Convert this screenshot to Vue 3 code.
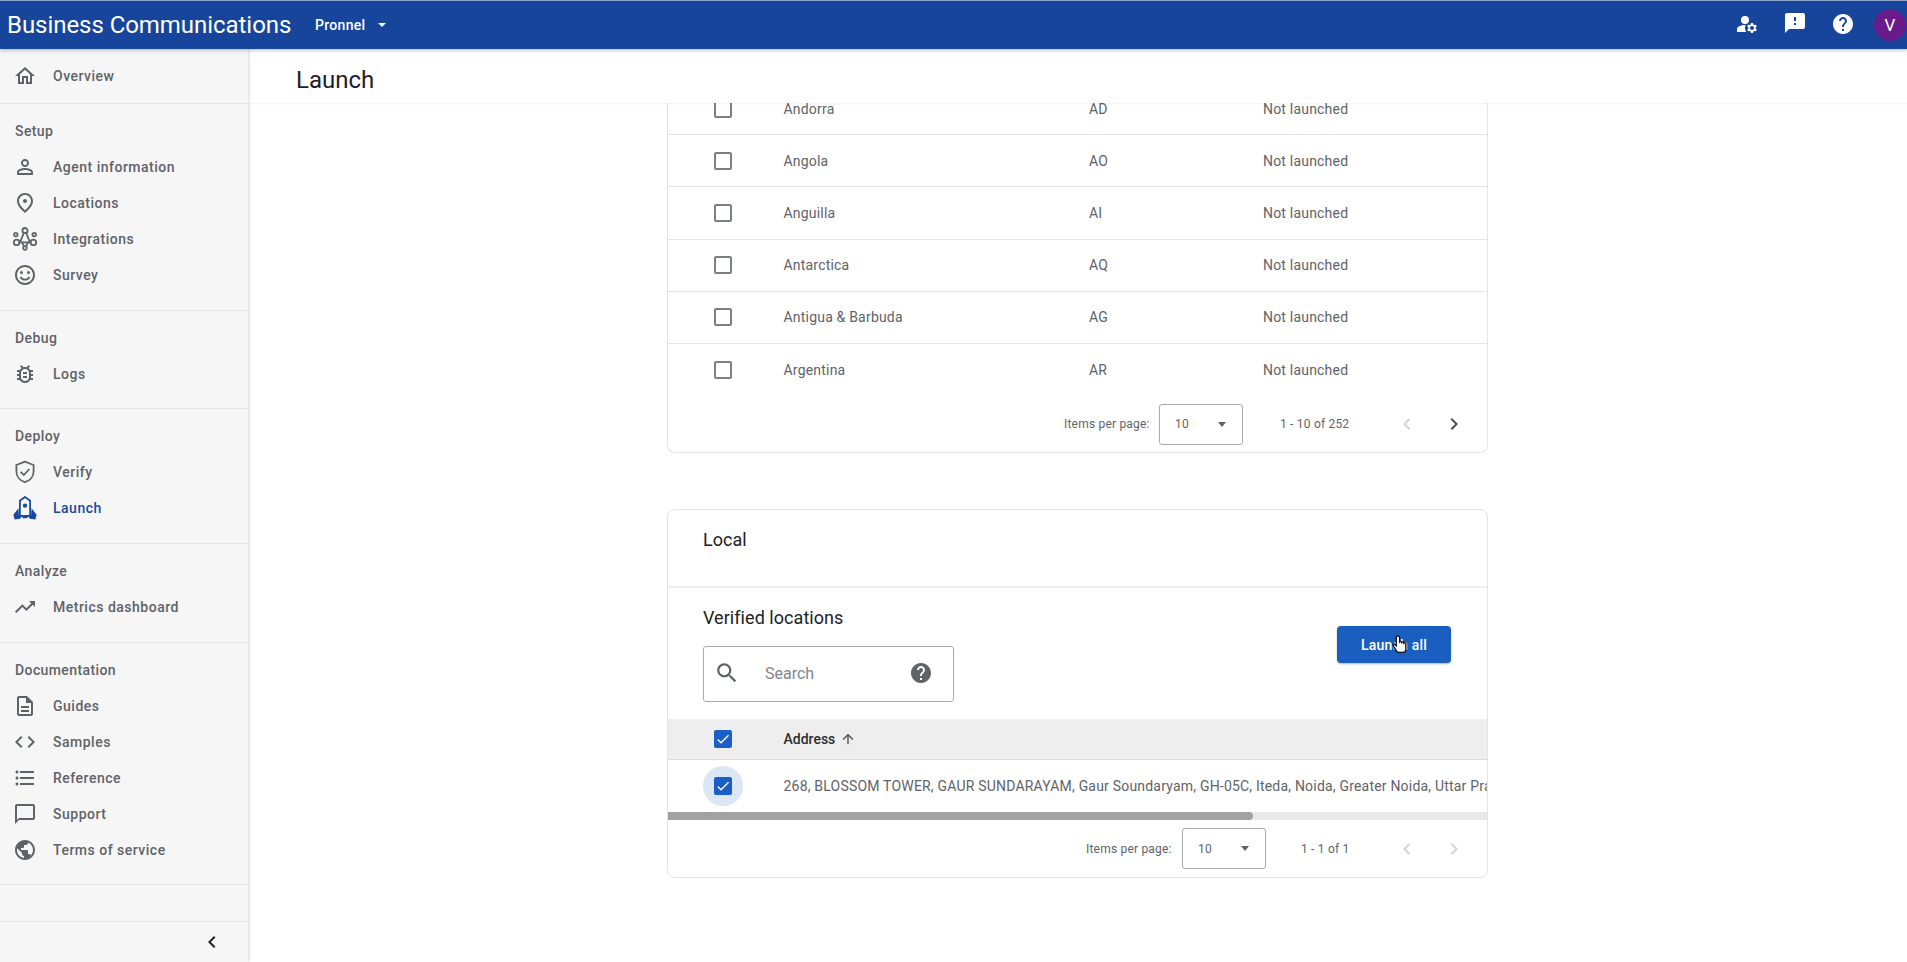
<template>
  <div class="page">
    <header class="topbar">
      <span class="brand">Business Communications</span>
      <span class="agent">Pronnel</span>
      <span class="agent-arrow"></span>
      <div class="top-actions">
        <svg class="top-icon" viewBox="0 0 24 24"><circle cx="10" cy="8" r="4" /><path v-for="d in icons.manage" :key="d" :d="d" /></svg>
        <svg class="top-icon feedback" viewBox="0 0 24 24"><path :d="icons.feedback" /></svg>
        <svg class="top-icon" viewBox="0 0 24 24"><path :d="icons.help" /></svg>
        <span class="avatar">V</span>
      </div>
    </header>

    <div class="body">
      <aside class="sidebar">
        <div v-for="section in nav" :key="section.title || 'main'" class="nav-section">
          <div v-if="section.title" class="nav-title">{{ section.title }}</div>
          <div
            v-for="item in section.items"
            :key="item.label"
            class="nav-item"
            :class="{ active: item.label === 'Launch' }"
          >
            <svg class="nav-icon" viewBox="0 0 24 24">
              <path v-for="d in item.fill" :key="d" :d="d" />
              <path v-for="d in item.line" :key="d" :d="d" class="line" />
            </svg>
            <span>{{ item.label }}</span>
          </div>
        </div>
        <div class="nav-spacer"></div>
        <div class="nav-footer">
          <svg class="collapse" viewBox="0 0 24 24"><path :d="icons.left" /></svg>
        </div>
      </aside>

      <main class="main">
        <div class="subheader"><h1>Launch</h1></div>
        <div class="scroller">
          <div class="scrolled">
            <section class="card">
              <div v-for="c in countries" :key="c.code" class="row">
                <div class="cell-check"><span class="checkbox"></span></div>
                <div class="country">{{ c.name }}</div>
                <div class="code">{{ c.code }}</div>
                <div>Not launched</div>
              </div>
              <div class="paginator first">
                <span class="per-page">Items per page:</span>
                <div class="page-select"><span>10</span><i class="select-arrow"></i></div>
                <span class="range">1 - 10 of 252</span>
                <svg class="pager-btn off" viewBox="0 0 24 24"><path :d="icons.left" /></svg>
                <svg class="pager-btn" viewBox="0 0 24 24"><path :d="icons.right" /></svg>
              </div>
            </section>

            <section class="card local">
              <div class="card-title">Local</div>
              <div class="verified">
                <div>
                  <h2>Verified locations</h2>
                  <div class="search">
                    <svg class="search-icon" viewBox="0 0 24 24"><path :d="icons.search" /></svg>
                    <span class="search-text">Search</span>
                    <svg class="search-help" viewBox="0 0 24 24"><path :d="icons.help" /></svg>
                  </div>
                </div>
                <button class="launch-btn">
                  Launch all
                  <svg class="hand" viewBox="0 0 24 24">
                    <path d="M9 2.5c-.9 0-1.5.7-1.5 1.6V14l-2-1.8c-.8-.7-2-.2-2 .8 0 .4.2.7.4 1l4 6.5c.6 1 1.6 1.5 2.7 1.5h5c2 0 3.4-1.5 3.4-3.5v-6.5c0-.9-.6-1.5-1.4-1.5-.4 0-.7.1-1 .4 0-.9-.7-1.4-1.4-1.4-.5 0-.9.2-1.2.6-.1-.8-.7-1.3-1.4-1.3-.4 0-.8.1-1 .4V4.1c0-.9-.7-1.6-1.6-1.6z" />
                  </svg>
                </button>
              </div>
              <div class="table-head">
                <div class="cell-check"><span class="checkbox checked"><svg viewBox="0 0 24 24"><path :d="icons.check" /></svg></span></div>
                <span class="address-head">Address</span>
                <svg class="sort" viewBox="0 0 24 24"><path :d="icons.up" /></svg>
              </div>
              <div class="address-row">
                <div class="cell-check">
                  <span class="ripple"></span>
                  <span class="checkbox checked"><svg viewBox="0 0 24 24"><path :d="icons.check" /></svg></span>
                </div>
                <div class="address">268, BLOSSOM TOWER, GAUR SUNDARAYAM, Gaur Soundaryam, GH-05C, Iteda, Noida, Greater Noida, Uttar Pradesh, India</div>
              </div>
              <div class="scrollbar"><div class="thumb"></div></div>
              <div class="paginator second">
                <span class="per-page">Items per page:</span>
                <div class="page-select"><span>10</span><i class="select-arrow"></i></div>
                <span class="range">1 - 1 of 1</span>
                <svg class="pager-btn off" viewBox="0 0 24 24"><path :d="icons.left" /></svg>
                <svg class="pager-btn off" viewBox="0 0 24 24"><path :d="icons.right" /></svg>
              </div>
            </section>
          </div>
        </div>
      </main>
    </div>
  </div>
</template>

<script setup>
const ring = (x, y, r) => `M${x - r} ${y}a${r} ${r} 0 1 0 ${r * 2} 0a${r} ${r} 0 1 0 ${-r * 2} 0z`

const icons = {
  left: "M15.41 7.41L14 6l-6 6 6 6 1.41-1.41L10.83 12z",
  right: "M10 6L8.59 7.41 13.17 12l-4.58 4.59L10 18l6-6z",
  check: "M9 16.17L4.83 12l-1.42 1.41L9 19 21 7l-1.41-1.41z",
  up: "M4 12l1.41 1.41L11 7.83V20h2V7.83l5.58 5.59L20 12l-8-8-8 8z",
  search: "M15.5 14h-.79l-.28-.27C15.41 12.59 16 11.11 16 9.5 16 5.91 13.09 3 9.5 3S3 5.91 3 9.5 5.91 16 9.5 16c1.61 0 3.09-.59 4.23-1.57l.27.28v.79l5 4.99L20.49 19l-4.99-5zm-6 0C7.01 14 5 11.99 5 9.5S7.01 5 9.5 5 14 7.01 14 9.5 11.99 14 9.5 14z",
  help: "M12 2C6.48 2 2 6.48 2 12s4.48 10 10 10 10-4.48 10-10S17.52 2 12 2zm1 17h-2v-2h2v2zm2.07-7.75l-.9.92C13.45 12.9 13 13.5 13 15h-2v-.5c0-1.1.45-2.1 1.17-2.83l1.24-1.26c.37-.36.59-.86.59-1.41 0-1.1-.9-2-2-2s-2 .9-2 2H8c0-2.21 1.79-4 4-4s4 1.79 4 4c0 .88-.36 1.68-.93 2.25z",
  feedback: "M20 2H4c-1.1 0-1.99.9-1.99 2L2 22l4-4h14c1.1 0 2-.9 2-2V4c0-1.1-.9-2-2-2zm-7 12h-2v-2h2v2zm0-4h-2V6h2v4z",
  manage: [
    "M10.67 13.02C10.45 13.01 10.23 13 10 13c-2.42 0-4.68.67-6.61 1.82-.88.52-1.39 1.5-1.39 2.53V20h9.26c-.79-1.13-1.26-2.51-1.26-4 0-1.07.25-2.07.67-2.98z",
    "M20.75 16c0-.22-.03-.42-.06-.63l1.14-1.01-1-1.73-1.45.49c-.32-.27-.68-.48-1.08-.63L18 11h-2l-.3 1.49c-.4.15-.76.36-1.08.63l-1.45-.49-1 1.73 1.14 1.01c-.03.21-.06.41-.06.63s.03.42.06.63l-1.14 1.01 1 1.73 1.45-.49c.32.27.68.48 1.08.63L16 21h2l.3-1.49c.4-.15.76-.36 1.08-.63l1.45.49 1-1.73-1.14-1.01c.03-.21.06-.41.06-.63zM17 18c-1.1 0-2-.9-2-2s.9-2 2-2 2 .9 2 2-.9 2-2 2z",
  ],
}

const nav = [
  {
    title: "",
    items: [
      { label: "Overview", fill: ["M12 5.69l5 4.5V18h-2v-6H9v6H7v-7.81l5-4.5M12 3L2 12h3v8h6v-6h2v6h6v-8h3L12 3z"] },
    ],
  },
  {
    title: "Setup",
    items: [
      { label: "Agent information", fill: ["M12 5.9c1.16 0 2.1.94 2.1 2.1s-.94 2.1-2.1 2.1S9.9 9.16 9.9 8s.94-2.1 2.1-2.1m0 9c2.97 0 6.1 1.46 6.1 2.1v1.1H5.9V17c0-.64 3.13-2.1 6.1-2.1M12 4C9.79 4 8 5.79 8 8s1.79 4 4 4 4-1.79 4-4-1.79-4-4-4zm0 9c-2.67 0-8 1.34-8 4v3h16v-3c0-2.66-5.33-4-8-4z"] },
      { label: "Locations", fill: ["M12 12c-1.1 0-2-.9-2-2s.9-2 2-2 2 .9 2 2-.9 2-2 2zm6-1.8C18 6.57 15.35 4 12 4s-6 2.57-6 6.2c0 2.34 1.95 5.44 6 9.14 4.05-3.7 6-6.8 6-9.14zM12 2c4.2 0 8 3.22 8 8.2 0 3.32-2.67 7.25-8 11.8-5.33-4.55-8-8.48-8-11.8C4 5.22 7.8 2 12 2z"] },
      {
        label: "Integrations",
        line: [
          ring(12, 3.6, 2.6), ring(2.8, 7.6, 1.8), ring(21.2, 7.6, 1.8), ring(3.6, 15.4, 2.8), ring(20.4, 15.4, 2.8), ring(12, 21, 1.8),
          "M10.8 6L7 15.4h10L13.2 6M6.4 15.4h11.2M9 15.6l2 3.6M15 15.6l-2 3.6",
        ],
      },
      {
        label: "Survey",
        fill: ["M11.99 2C6.47 2 2 6.48 2 12s4.47 10 9.99 10C17.52 22 22 17.52 22 12S17.52 2 11.99 2zM12 20c-4.42 0-8-3.58-8-8s3.58-8 8-8 8 3.58 8 8-3.58 8-8 8z", ring(8.5, 9.5, 1.5), ring(15.5, 9.5, 1.5)],
        line: ["M7.5 14c1 1.8 2.6 2.7 4.5 2.7s3.5-.9 4.5-2.7"],
      },
    ],
  },
  {
    title: "Debug",
    items: [
      { label: "Logs", fill: ["M20 8h-2.81c-.45-.78-1.07-1.45-1.82-1.96L17 4.41 15.59 3l-2.17 2.17C12.96 5.06 12.49 5 12 5s-.96.06-1.41.17L8.41 3 7 4.41l1.62 1.63C7.88 6.55 7.26 7.22 6.81 8H4v2h2.09c-.05.33-.09.66-.09 1v1H4v2h2v1c0 .34.04.67.09 1H4v2h2.81c1.04 1.79 2.97 3 5.19 3s4.15-1.21 5.19-3H20v-2h-2.09c.05-.33.09-.66.09-1v-1h2v-2h-2v-1c0-.34-.04-.67-.09-1H20V8zm-4 4v3c0 .22-.03.47-.07.7l-.1.65-.37.65c-.72 1.24-2.04 2-3.46 2s-2.74-.77-3.46-2l-.37-.64-.1-.65C8.03 15.48 8 15.23 8 15v-4c0-.23.03-.48.07-.7l.1-.65.37-.65c.3-.52.72-.97 1.21-1.31l.57-.39.74-.18c.31-.08.63-.12.94-.12.32 0 .63.04.95.12l.68.16.61.42c.5.34.91.78 1.21 1.31l.38.65.1.65c.04.22.07.47.07.69v1zm-6 2h4v2h-4zm0-4h4v2h-4z"] },
    ],
  },
  {
    title: "Deploy",
    items: [
      { label: "Verify", line: ["M12 1.6L3.4 5v6.4c0 5 3.6 9.2 8.6 10.8 5-1.6 8.6-5.8 8.6-10.8V5z", "M7.6 11.8l3.2 3.2 5.6-6"] },
      {
        label: "Launch",
        fill: [ring(12, 9.6, 2.2), "M5.4 12.2L.4 18.8l1.2 4.8 5.6-.8 1.2-2.8H6zM18.6 12.2l5 6.6-1.2 4.8-5.6-.8-1.2-2.8H18zM9.5 20.2h5v2h-5z"],
        line: ["M12 1L6.9 4.8V20h10.2V4.8z"],
      },
    ],
  },
  {
    title: "Analyze",
    items: [{ label: "Metrics dashboard", fill: ["M16 6l2.29 2.29-4.88 4.88-4-4L2 16.59 3.41 18l6-6 4 4 6.3-6.29L22 12V6z"] }],
  },
  {
    title: "Documentation",
    items: [
      { label: "Guides", fill: ["M8 16h8v2H8zm0-4h8v2H8zm6-10H6c-1.1 0-2 .9-2 2v16c0 1.1.89 2 1.99 2H18c1.1 0 2-.9 2-2V8l-6-6zm4 18H6V4h7v5h5v11z"] },
      { label: "Samples", fill: ["M9.4 16.6L4.8 12l4.6-4.6L8 6l-6 6 6 6 1.4-1.4zm5.2 0l4.6-4.6-4.6-4.6L16 6l6 6-6 6-1.4-1.4z"] },
      { label: "Reference", fill: ["M4 10.5c-.83 0-1.5.67-1.5 1.5s.67 1.5 1.5 1.5 1.5-.67 1.5-1.5-.67-1.5-1.5-1.5zm0-6c-.83 0-1.5.67-1.5 1.5S3.17 7.5 4 7.5 5.5 6.83 5.5 6 4.83 4.5 4 4.5zm0 12c-.83 0-1.5.68-1.5 1.5s.68 1.5 1.5 1.5 1.5-.68 1.5-1.5-.67-1.5-1.5-1.5zM7 19h14v-2H7v2zm0-6h14v-2H7v2zm0-8v2h14V5H7z"] },
      { label: "Support", fill: ["M20 2H4c-1.1 0-2 .9-2 2v18l4-4h14c1.1 0 2-.9 2-2V4c0-1.1-.9-2-2-2zm0 14H6l-2 2V4h16v12z"] },
      { label: "Terms of service", fill: ["M12 2C6.48 2 2 6.48 2 12s4.48 10 10 10 10-4.48 10-10S17.52 2 12 2zm-1 17.93c-3.95-.49-7-3.85-7-7.93 0-.62.08-1.21.21-1.79L9 15v1c0 1.1.9 2 2 2v1.93zm6.9-2.54c-.26-.81-1-1.39-1.9-1.39h-1v-3c0-.55-.45-1-1-1H8v-2h2c.55 0 1-.45 1-1V7h2c1.1 0 2-.9 2-2v-.41c2.93 1.19 5 4.06 5 7.41 0 2.08-.8 3.97-2.1 5.39z"] },
    ],
  },
]

const countries = [
  { name: "Andorra", code: "AD" },
  { name: "Angola", code: "AO" },
  { name: "Anguilla", code: "AI" },
  { name: "Antarctica", code: "AQ" },
  { name: "Antigua & Barbuda", code: "AG" },
  { name: "Argentina", code: "AR" },
]
</script>

<style>
html,
body {
  margin: 0;
  height: 100%;
  overflow: hidden;
  background: #fff;
}
</style>

<style scoped>
.page {
  height: 962px;
  display: flex;
  flex-direction: column;
  font-family: Roboto, "Liberation Sans", sans-serif;
  font-size: 14px;
  color: #5f6368;
}

.topbar {
  height: 49px;
  flex: none;
  box-sizing: border-box;
  display: flex;
  align-items: center;
  padding-left: 7px;
  background: #17459b;
  border-top: 1px solid #8ea3cb;
  color: #fff;
  box-shadow: 0 1px 4px rgba(0, 0, 0, 0.3);
  position: relative;
  z-index: 3;
}

.brand {
  font-size: 24px;
  letter-spacing: -0.05px;
  width: 308px;
  white-space: nowrap;
}

.agent {
  font-size: 14px;
  font-weight: 500;
  letter-spacing: 0.3px;
}

.agent-arrow {
  margin-left: 13px;
  border-left: 4px solid transparent;
  border-right: 4px solid transparent;
  border-top: 4px solid #fff;
}

.top-actions {
  margin-left: auto;
  display: flex;
  align-items: center;
  gap: 24px;
}

.top-icon {
  width: 24px;
  height: 24px;
  margin-top: -2px;
  fill: #fff;
}

.feedback {
  margin-top: -5px;
}

.avatar {
  width: 32px;
  height: 32px;
  border-radius: 50%;
  background: #6a1b8a;
  display: flex;
  align-items: center;
  justify-content: center;
  font-size: 17px;
  margin-left: -5px;
  margin-right: 1px;
}

.body {
  flex: 1;
  display: flex;
  min-height: 0;
}

.sidebar {
  width: 248px;
  flex: none;
  display: flex;
  flex-direction: column;
  background: #f6f6f6;
  box-shadow: 1px 0 3px rgba(0, 0, 0, 0.16);
  position: relative;
  z-index: 2;
}

.nav-section {
  padding: 9px 0 16.7px;
  border-bottom: 1px solid #e6e6e6;
}

.nav-section:first-child {
  padding-bottom: 9px;
}

.nav-title {
  height: 36px;
  line-height: 36px;
  padding-left: 15px;
  font-weight: 500;
  letter-spacing: 0.4px;
}

.nav-item {
  height: 36px;
  display: flex;
  align-items: center;
  padding-left: 13px;
  font-weight: 500;
  letter-spacing: 0.5px;
}

.nav-icon {
  width: 24px;
  height: 24px;
  margin-right: 16px;
  fill: #5f6368;
  flex: none;
}

.nav-icon .line {
  fill: none;
  stroke: #5f6368;
  stroke-width: 1.8;
}

.nav-item.active {
  color: #1a4a9f;
}

.nav-item.active .nav-icon {
  fill: #1a4a9f;
}

.nav-item.active .line {
  stroke: #1a4a9f;
}

.nav-spacer {
  height: 36px;
  border-bottom: 1px solid #e6e6e6;
}

.nav-footer {
  flex: 1;
  display: flex;
  align-items: center;
  justify-content: flex-end;
  padding-right: 24px;
}

.collapse {
  width: 24px;
  height: 24px;
  fill: #202124;
}

.main {
  flex: 1;
  min-width: 0;
  display: flex;
  flex-direction: column;
}

.subheader {
  height: 54px;
  flex: none;
  box-sizing: border-box;
  display: flex;
  align-items: center;
  padding: 7px 0 0 48px;
  background: #fff;
  box-shadow: 0 1px 2px rgba(0, 0, 0, 0.06);
  position: relative;
  z-index: 1;
}

h1 {
  margin: 0;
  font-size: 24px;
  font-weight: 400;
  color: #202124;
}

.scroller {
  flex: 1;
  overflow: hidden;
}

/* page is scrolled down, first rows sit behind the subheader */
.scrolled {
  margin-top: -20px;
}

.card {
  width: 821px;
  box-sizing: border-box;
  margin: 0 auto;
  background: #fff;
  border: 1px solid #e4e4e4;
  border-top: none;
  border-radius: 0 0 8px 8px;
}

.row {
  height: 52.2px;
  box-sizing: border-box;
  display: grid;
  grid-template-columns: 115.5px 305.5px 174px 1fr;
  align-items: center;
  border-bottom: 1px solid #e4e4e4;
  letter-spacing: 0.2px;
}

.row:nth-last-child(2) {
  border-bottom: none;
}

.cell-check {
  display: flex;
  padding-left: 46px;
  position: relative;
}

.checkbox {
  width: 18px;
  height: 18px;
  box-sizing: border-box;
  border: 2px solid #7c7f83;
  border-radius: 2px;
  display: block;
  position: relative;
}

.checkbox.checked {
  background: #1a5fc8;
  border-color: #1a5fc8;
}

.checkbox svg {
  position: absolute;
  left: -1px;
  top: -1px;
  width: 16px;
  height: 16px;
  fill: #fff;
}

.ripple {
  position: absolute;
  left: 35px;
  top: -11px;
  width: 40px;
  height: 40px;
  border-radius: 50%;
  background: #dce7f6;
}

.paginator {
  display: flex;
  align-items: center;
  font-size: 12px;
  letter-spacing: 0.2px;
}

.paginator > * {
  flex: none;
}

.paginator.first {
  height: 56px;
  padding-left: 396px;
}

.paginator.second {
  height: 57px;
  padding-left: 418px;
}

.per-page {
  width: 92px;
  white-space: nowrap;
}

.first .per-page {
  margin-right: 3px;
}

.second .per-page {
  margin-right: 4px;
}

.page-select {
  width: 84px;
  height: 41px;
  box-sizing: border-box;
  display: flex;
  align-items: center;
  justify-content: space-between;
  padding: 0 16px 0 15px;
  border: 1px solid #a8abae;
  border-radius: 3px;
  color: #5f6368;
}

.select-arrow {
  border-left: 4.5px solid transparent;
  border-right: 4.5px solid transparent;
  border-top: 5px solid #5f6368;
}

.range {
  white-space: nowrap;
}

.first .range {
  margin-left: 37px;
  width: 115px;
}

.second .range {
  margin-left: 35px;
  width: 94px;
}

.pager-btn {
  width: 24px;
  height: 24px;
  fill: #4a4d51;
  margin-right: 23px;
}

.pager-btn:last-child {
  margin-right: 0;
}

.pager-btn.off {
  fill: #d4d6d8;
}

.local {
  margin-top: 56px;
  height: 369px;
  border-top: 1px solid #e4e4e4;
  border-radius: 8px;
  overflow: hidden;
}

.card-title {
  height: 78px;
  box-sizing: border-box;
  padding: 18px 0 0 35px;
  font-size: 18px;
  line-height: 24px;
  color: #202124;
  border-bottom: 2px solid #efefef;
}

.verified {
  height: 131px;
  box-sizing: border-box;
  display: flex;
  justify-content: space-between;
  padding: 0 36px 0 35px;
  align-items: flex-start;
}

h2 {
  margin: 18px 0 16px;
  font-size: 18px;
  line-height: 24px;
  font-weight: 400;
  color: #202124;
  letter-spacing: 0.05px;
}

.search {
  width: 251px;
  height: 56px;
  box-sizing: border-box;
  display: flex;
  align-items: center;
  padding: 0 20px 2px 10px;
  border: 1px solid #a8abae;
  border-radius: 3px;
}

.search-icon {
  width: 26px;
  height: 26px;
  fill: #5f6368;
  flex: none;
}

.search-text {
  margin-left: 25px;
  font-size: 16px;
  color: #80868b;
}

.search-help {
  margin-left: auto;
  width: 24px;
  height: 24px;
  fill: #5f6368;
}

.launch-btn {
  position: relative;
  margin-top: 38px;
  width: 114px;
  height: 37px;
  border: none;
  border-radius: 4px;
  background: #1a5fbf;
  color: #fff;
  font-family: inherit;
  font-size: 14px;
  font-weight: 500;
  letter-spacing: 0.2px;
  box-shadow: 0 1px 2px rgba(0, 0, 0, 0.3);
}

/* mouse pointer caught in the capture */
.hand {
  position: absolute;
  left: 53px;
  top: 8px;
  width: 20px;
  height: 20px;
  fill: #fff;
  stroke: #111;
  stroke-width: 1.6;
}

.table-head {
  height: 41px;
  box-sizing: border-box;
  display: flex;
  align-items: center;
  background: #eeeeee;
  border-bottom: 1px solid #dcdcdc;
}

.table-head .cell-check {
  width: 115.5px;
  box-sizing: border-box;
}

.address-head {
  font-weight: 500;
  color: #2b2d30;
}

.sort {
  width: 16px;
  height: 16px;
  margin-left: 5px;
  fill: #4a4d51;
}

.address-row {
  height: 52px;
  display: flex;
  align-items: center;
}

.address-row .cell-check {
  width: 115.5px;
  flex: none;
  box-sizing: border-box;
}

.address {
  white-space: nowrap;
  letter-spacing: 0.2px;
}

.scrollbar {
  height: 8px;
  background: #e9e9e9;
}

.thumb {
  width: 585px;
  height: 8px;
  background: #a1a1a1;
  border-radius: 0 4px 4px 0;
}
</style>
